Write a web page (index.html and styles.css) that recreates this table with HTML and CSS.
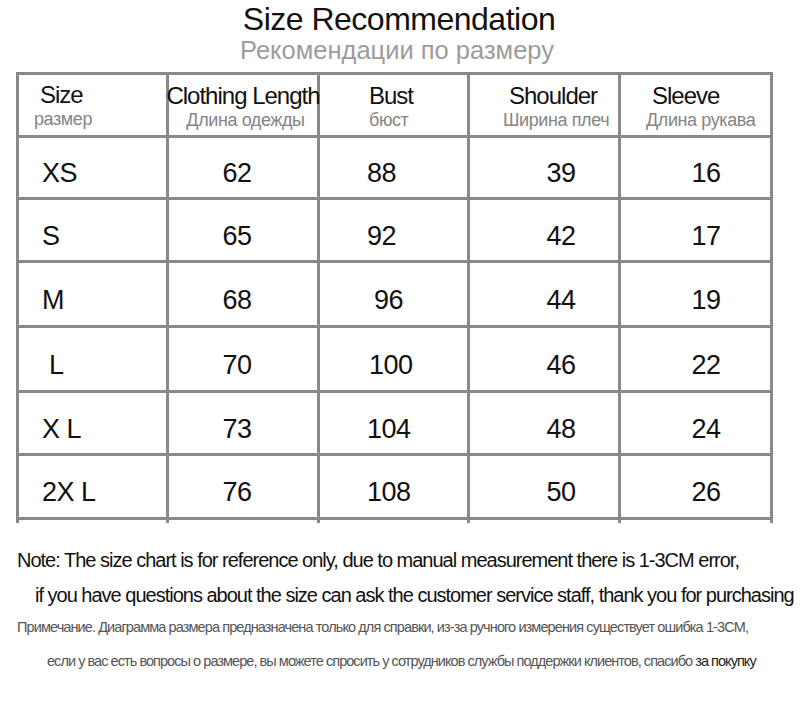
FILE: index.html
```html
<!DOCTYPE html>
<html lang="en">
<head>
<meta charset="utf-8">
<title>Size Recommendation</title>
<link rel="stylesheet" href="styles.css">
</head>
<body>
<div class="page">
  <header class="heading">
    <h1 class="title">Size Recommendation</h1>
    <p class="subtitle">Рекомендации по размеру</p>
  </header>

  <div class="chart">
    <div class="cell head c1"><span class="en">Size</span><span class="ru">размер</span></div>
    <div class="cell head c2"><span class="en">Clothing Length</span><span class="ru">Длина одежды</span></div>
    <div class="cell head c3"><span class="en">Bust</span><span class="ru">бюст</span></div>
    <div class="cell head c4"><span class="en">Shoulder</span><span class="ru">Ширина плеч</span></div>
    <div class="cell head c5"><span class="en">Sleeve</span><span class="ru">Длина рукава</span></div>

    <div class="cell data c1">XS</div>
    <div class="cell data c2">62</div>
    <div class="cell data c3">88</div>
    <div class="cell data c4">39</div>
    <div class="cell data c5">16</div>

    <div class="cell data c1">S</div>
    <div class="cell data c2">65</div>
    <div class="cell data c3">92</div>
    <div class="cell data c4">42</div>
    <div class="cell data c5">17</div>

    <div class="cell data c1">M</div>
    <div class="cell data c2">68</div>
    <div class="cell data c3 nudge-7">96</div>
    <div class="cell data c4">44</div>
    <div class="cell data c5">19</div>

    <div class="cell data c1 nudge-7">L</div>
    <div class="cell data c2">70</div>
    <div class="cell data c3 nudge-2">100</div>
    <div class="cell data c4">46</div>
    <div class="cell data c5">22</div>

    <div class="cell data c1">X L</div>
    <div class="cell data c2">73</div>
    <div class="cell data c3">104</div>
    <div class="cell data c4">48</div>
    <div class="cell data c5">24</div>

    <div class="cell data c1">2X L</div>
    <div class="cell data c2">76</div>
    <div class="cell data c3">108</div>
    <div class="cell data c4">50</div>
    <div class="cell data c5">26</div>

    <div class="cell stub"></div>
    <div class="cell stub"></div>
    <div class="cell stub"></div>
    <div class="cell stub"></div>
    <div class="cell stub"></div>
  </div>

  <section class="notes">
    <p class="note-en first">Note: The size chart is for reference only, due to manual measurement there is 1-3CM error,</p>
    <p class="note-en second">if you have questions about the size can ask the customer service staff, thank you for purchasing</p>
    <p class="note-ru first">Примечание. Диаграмма размера предназначена только для справки, из-за ручного измерения существует ошибка 1-3CM,</p>
    <p class="note-ru second">если у вас есть вопросы о размере, вы можете спросить у сотрудников службы поддержки клиентов, спасибо <span class="dark">за покупку</span></p>
  </section>
</div>
</body>
</html>
```

FILE: styles.css
```css
* {
  box-sizing: border-box;
}

html, body {
  margin: 0;
  padding: 0;
  background: #ffffff;
}

body {
  font-family: "Liberation Sans", Arial, sans-serif;
  color: #111111;
}

.page {
  width: 800px;
  height: 718px;
  overflow: hidden;
}

/* ---------- heading ---------- */
.heading {
  text-align: center;
}

.title {
  margin: 0;
  font-size: 32px;
  font-weight: normal;
  line-height: 38px;
  letter-spacing: -0.5px;
  color: #111111;
  padding-right: 2px;
}

.subtitle {
  margin: 0;
  font-size: 25.5px;
  line-height: 24px;
  letter-spacing: 0;
  color: #9c9c9c;
  padding-right: 6px;
}

/* ---------- chart ---------- */
.chart {
  margin: 10px 0 0 16px;
  width: 757px;
  display: grid;
  grid-template-columns: 147px 148px 147px 148px 149px;
  grid-template-rows: 60px 59px 60px 62px 62px 60px 61px 3px;
  gap: 3px;
  padding: 3px 3px 0 3px;
  background: #898989;
}

.cell {
  background: #ffffff;
  white-space: nowrap;
}

.head {
  display: flex;
  flex-direction: column;
  padding-top: 9px;
}

.head .en {
  font-size: 24px;
  line-height: 24px;
  letter-spacing: -1px;
  color: #111111;
}

.head .ru {
  font-size: 18px;
  line-height: 18px;
  margin-top: 3px;
  letter-spacing: -0.4px;
  color: #858585;
}

.head.c1 {
  padding-top: 8px;
  padding-left: 21px;
}
.head.c1 .ru { margin-left: -6px; }

.head.c2 {
  align-items: center;
  position: relative;
  z-index: 1;
}
.head.c2 .ru { margin-left: 5px; }

.head.c3 {
  padding-left: 49px;
}

.head.c4 {
  padding-left: 39px;
}
.head.c4 .ru { margin-left: -6px; }

.head.c5 {
  padding-left: 31px;
}
.head.c5 .ru { margin-left: -6px; }

.data {
  display: flex;
  align-items: center;
  padding-top: 12px;
  font-size: 27px;
  line-height: 27px;
  letter-spacing: -0.5px;
  color: #111111;
}

.data.c1 {
  padding-left: 23px;
}

.data.c2 {
  justify-content: center;
  padding-right: 12px;
}

.data.c3 {
  padding-left: 47px;
}

.data.c4 {
  justify-content: center;
  padding-left: 34px;
}

.data.c5 {
  justify-content: center;
  padding-left: 21px;
}

.data.c1.nudge-7 { padding-left: 30px; }
.data.c3.nudge-7 { padding-left: 54px; }
.data.c3.nudge-2 { padding-left: 49px; }

/* ---------- notes ---------- */
.notes {
  margin-top: 20px;
  padding-left: 17px;
}

.notes p {
  margin: 0;
  white-space: nowrap;
}

.note-en {
  font-size: 20px;
  line-height: 35px;
  letter-spacing: -1px;
  color: #111111;
}

.note-en.second {
  padding-left: 18px;
}

.note-ru {
  font-size: 14.5px;
  letter-spacing: -0.9px;
  color: #555555;
}

.note-ru.first {
  line-height: 28px;
}

.note-ru.second {
  line-height: 40px;
  padding-left: 30px;
  letter-spacing: -0.95px;
}

.note-ru .dark {
  color: #222222;
}
```
